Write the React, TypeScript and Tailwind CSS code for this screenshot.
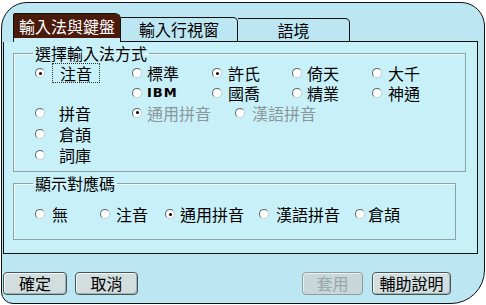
import React from "react";

function Radio({ checked = false }: { checked?: boolean }) {
  return (
    <span className="relative inline-block w-[10px] h-[10px] shrink-0 rounded-full bg-white border border-[#5c6468] border-r-[#c4cccf] border-b-[#c4cccf]">
      {checked && (
        <span className="absolute left-[2.5px] top-[2.5px] w-[3px] h-[3px] rounded-full bg-black" />
      )}
    </span>
  );
}

function Item({
  label,
  w,
  gap,
  checked,
  disabled,
  children,
}: {
  label?: string;
  w?: string;
  gap: string;
  checked?: boolean;
  disabled?: boolean;
  children?: React.ReactNode;
}) {
  return (
    <div className={`flex items-center shrink-0 leading-[18px] ${w ?? ""} ${gap}`}>
      <Radio checked={checked} />
      {children ?? (
        <span className={disabled ? "text-[#8a979b]" : "text-black"}>{label}</span>
      )}
    </div>
  );
}

function Btn({ label, w, disabled }: { label: string; w: string; disabled?: boolean }) {
  return (
    <div
      className={`${w} h-[23px] shrink-0 rounded-[4px] border flex items-center justify-center text-[16px] leading-[21px] ${
        disabled
          ? "border-[#8c9ea2] bg-[#c8d8d9] text-[#98a8aa] shadow-[inset_1px_1px_0_#e8f2f2]"
          : "border-[#45565b] bg-[#d2dddd] text-black shadow-[inset_1px_1px_0_#f4fafa,inset_-1px_-1px_0_#9fb0b2]"
      }`}
    >
      {label}
    </div>
  );
}

export default function App() {
  return (
    <div className="w-[486px] h-[305px] bg-white overflow-hidden font-['Noto_Sans_CJK_TC','Noto_Sans',sans-serif] text-[16px] leading-[20px] text-black">
      <div className="ml-px mt-[2px] w-[484px] h-[302px] border border-[#111] rounded-tl-[26px] rounded-tr-[24px] rounded-bl-[12px] rounded-br-[34px] bg-[#bde6f3] overflow-hidden flex flex-col">
        {/* tab strip */}
        <div className="h-[39px] flex items-end pl-px pr-[6px] shrink-0">
          <div className="w-[10px] h-px" />
          <div className="w-[108px] h-[29px] border-t border-l border-r border-[#111] rounded-tr-[6px] rounded-tl-[2px] bg-[#c8f0f9] flex flex-col">
            <div className="h-[24px] bg-[#4a1a0b] text-white text-center leading-[24px] rounded-tr-[4px]">
              輸入法與鍵盤
            </div>
          </div>
          <div className="w-[117px] h-[25px] border-t border-r border-b border-[#111] rounded-tr-[5px] text-center leading-[23px]">
            輸入行視窗
          </div>
          <div className="w-[112px] h-[24px] border-t border-r border-b border-[#111] rounded-tr-[5px] text-center leading-[22px]">
            語境
          </div>
          <div className="flex-1 h-px bg-[#111]" />
        </div>

        {/* panel */}
        <div className="ml-px w-[475px] h-[212px] shrink-0 border-l border-r border-b border-[#111] bg-[#c8f0f9] pl-[9px] flex flex-col">
          <fieldset className="mt-px w-[453px] h-[129px] border border-[#8da0a6] shadow-[inset_1px_1px_0_#f2fbfd]">
            <legend className="ml-[19px] px-[2px] leading-[20px]">選擇輸入法方式</legend>
            <div className="pl-[21px] flex flex-col">
              <div className="flex items-center h-[20px]">
                <Item w="w-[97px]" gap="gap-[15px]" checked>
                  <span className="relative">
                    注音
                    <span className="absolute -left-[8px] -right-[8px] -top-px -bottom-px border border-dotted border-[#333]" />
                  </span>
                </Item>
                <Item w="w-[80px]" gap="gap-[5px]" label="標準" />
                <Item w="w-[80px]" gap="gap-[6px]" label="許氏" checked />
                <Item w="w-[80px]" gap="gap-[5px]" label="倚天" />
                <Item gap="gap-[6px]" label="大千" />
              </div>
              <div className="flex items-center h-[19px]">
                <div className="w-[97px] shrink-0" />
                <Item w="w-[80px]" gap="gap-[5px]">
                  <span className="font-['DejaVu_Sans'] font-bold text-[13px] tracking-[1px]">IBM</span>
                </Item>
                <Item w="w-[80px]" gap="gap-[6px]" label="國喬" />
                <Item w="w-[80px]" gap="gap-[5px]" label="精業" />
                <Item gap="gap-[6px]" label="神通" />
              </div>
              <div className="flex items-center h-[21px]">
                <Item w="w-[97px]" gap="gap-[14px]" label="拼音" />
                <Item w="w-[103px]" gap="gap-[5px]" label="通用拼音" checked disabled />
                <Item gap="gap-[7px]" label="漢語拼音" disabled />
              </div>
              <div className="flex items-center h-[21px]">
                <Item w="w-[97px]" gap="gap-[14px]" label="倉頡" />
              </div>
              <div className="flex items-center h-[21px]">
                <Item w="w-[97px]" gap="gap-[14px]" label="詞庫" />
              </div>
            </div>
          </fieldset>

          <fieldset className="mt-px w-[443px] h-[67px] border border-[#8da0a6] shadow-[inset_1px_1px_0_#f2fbfd]">
            <legend className="ml-[19px] px-[2px] leading-[20px]">顯示對應碼</legend>
            <div className="pl-[21px] pt-[11px] flex items-center h-[31px]">
              <Item w="w-[65px]" gap="gap-[7px]" label="無" />
              <Item w="w-[65px]" gap="gap-[6px]" label="注音" />
              <Item w="w-[94px]" gap="gap-[5px]" label="通用拼音" checked />
              <Item w="w-[96px]" gap="gap-[7px]" label="漢語拼音" />
              <Item gap="gap-[3px]" label="倉頡" />
            </div>
          </fieldset>
        </div>

        {/* buttons */}
        <div className="mt-[18px] flex items-center pl-px pr-[33px]">
          <Btn label="確定" w="w-[64px]" />
          <div className="w-[8px] shrink-0" />
          <Btn label="取消" w="w-[63px]" />
          <div className="flex-1" />
          <Btn label="套用" w="w-[61px]" disabled />
          <div className="w-[9px] shrink-0" />
          <Btn label="輔助說明" w="w-[79px]" />
        </div>
      </div>
    </div>
  );
}
